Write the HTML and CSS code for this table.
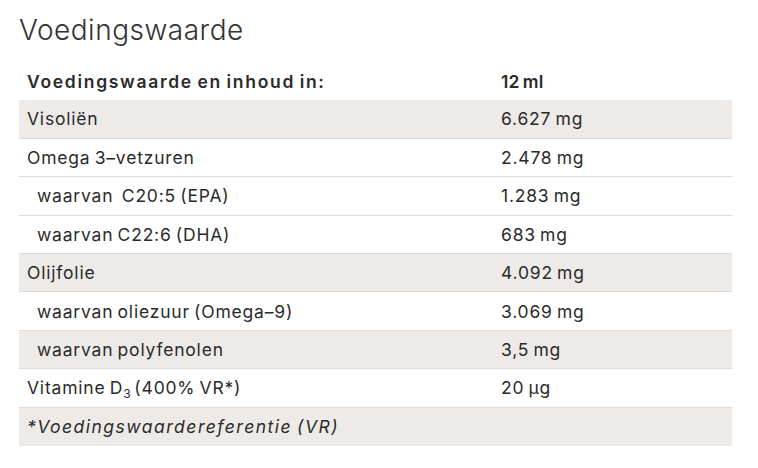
FILE: index.html
```html
<!DOCTYPE html>
<html lang="nl">
<head>
<meta charset="utf-8">
<link rel="stylesheet" href="styles.css">
</head>
<body>
<section class="nutrition">
  <h2 class="title">Voedingswaarde</h2>
  <table class="table">
    <thead>
      <tr class="head">
        <th class="name">Voedingswaarde en inhoud in:</th>
        <th class="value">12 ml</th>
      </tr>
    </thead>
    <tbody>
      <tr class="shade"><td class="name">Visoliën</td><td class="value">6.627 mg</td></tr>
      <tr><td class="name">Omega 3–vetzuren</td><td class="value">2.478 mg</td></tr>
      <tr><td class="name sub">waarvan&nbsp; C20:5 (EPA)</td><td class="value">1.283 mg</td></tr>
      <tr><td class="name sub">waarvan C22:6 (DHA)</td><td class="value">683 mg</td></tr>
      <tr class="shade"><td class="name">Olijfolie</td><td class="value">4.092 mg</td></tr>
      <tr><td class="name sub">waarvan oliezuur (Omega–9)</td><td class="value">3.069 mg</td></tr>
      <tr class="shade"><td class="name sub">waarvan polyfenolen</td><td class="value">3,5 mg</td></tr>
      <tr><td class="name">Vitamine D<sub class="idx">3</sub>(400% VR*)</td><td class="value">20 µg</td></tr>
      <tr class="shade foot"><td class="name note">*Voedingswaardereferentie (VR)</td><td class="value"></td></tr>
    </tbody>
  </table>
</section>
</body>
</html>
```
FILE: styles.css
```css
html, body {
  margin: 0;
  padding: 0;
  background: #ffffff;
}
body {
  font-family: "Inter", "Liberation Sans", sans-serif;
  color: #2b2b2b;
}
.nutrition {
  padding: 12px 26px 0 19px;
}
.title {
  margin: 0;
  font-size: 28px;
  line-height: 36px;
  font-weight: 300;
  color: #333;
  letter-spacing: 0.5px;
}
.table {
  margin-top: 14px;
  width: 713px;
  border-collapse: collapse;
  font-size: 17.5px;
  letter-spacing: 0.8px;
  word-spacing: -1.5px;
}
.table th, .table td {
  height: 38.4px;
  padding: 0 8px;
  text-align: left;
  vertical-align: middle;
  box-sizing: border-box;
  font-weight: 400;
}
.table tbody td {
  border-top: 1px solid #dddad7;
}
.table tbody tr:first-child td {
  border-top: none;
}
.head th {
  font-weight: 600;
  height: 38px;
  letter-spacing: 1.7px;
}
.head .value {
  letter-spacing: 0.2px;
}
.name {
  width: 474px;
}
.sub {
  padding-left: 18px !important;
}
.shade td {
  background: #eeeae7;
}
.note {
  font-style: italic;
  letter-spacing: 1.5px;
}
.idx {
  font-size: 12px;
  vertical-align: -4px;
  line-height: 0;
  margin-right: 3px;
}
```
